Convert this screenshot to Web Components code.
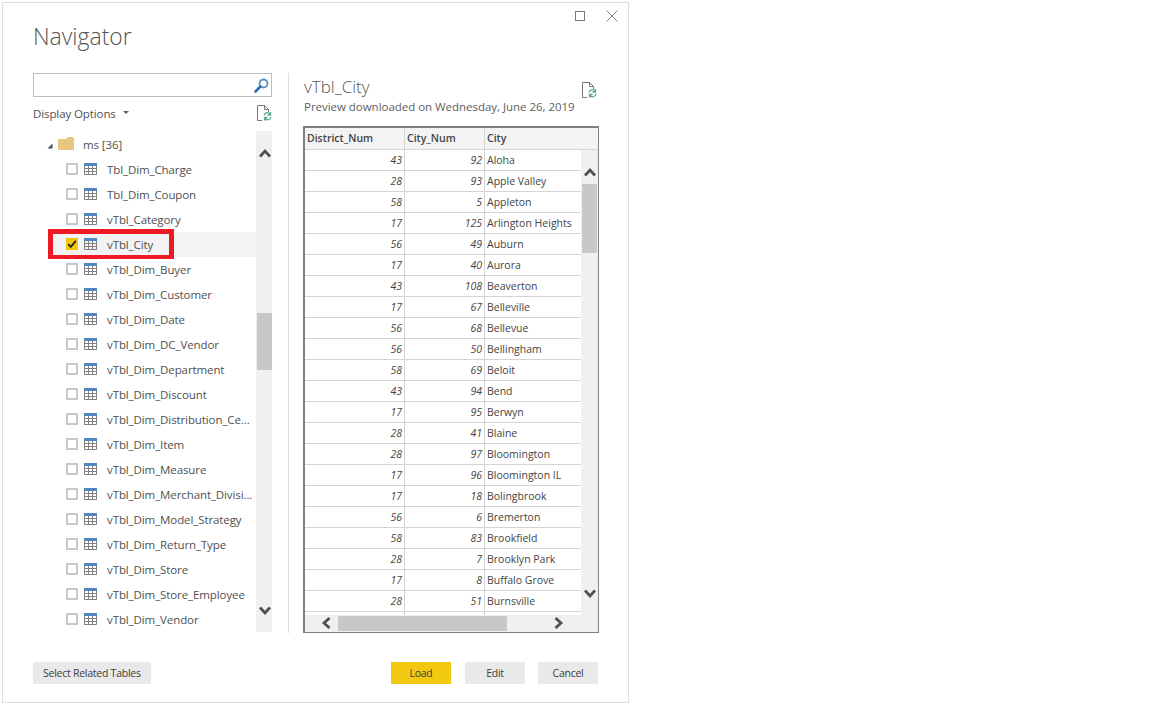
<!DOCTYPE html>
<html>
<head>
<meta charset="utf-8">
<title>Navigator</title>
<style>
	html, body { margin: 0; height: 100%; background: #fff; }
	body { font-family: "Open Sans", "Noto Sans", sans-serif; color: #444; overflow: hidden; }
	nav-button:last-child { margin-left: -1px; }
</style>
</head>
<body>
<nav-window>
	<nav-pane slot="left">
		<nav-search></nav-search>
		<nav-options></nav-options>
		<tree-list>
			<tree-row kind="folder" label="ms [36]"></tree-row>
			<tree-row label="Tbl_Dim_Charge"></tree-row>
			<tree-row label="Tbl_Dim_Coupon"></tree-row>
			<tree-row label="vTbl_Category"></tree-row>
			<tree-row label="vTbl_City" checked></tree-row>
			<tree-row label="vTbl_Dim_Buyer"></tree-row>
			<tree-row label="vTbl_Dim_Customer"></tree-row>
			<tree-row label="vTbl_Dim_Date"></tree-row>
			<tree-row label="vTbl_Dim_DC_Vendor"></tree-row>
			<tree-row label="vTbl_Dim_Department"></tree-row>
			<tree-row label="vTbl_Dim_Discount"></tree-row>
			<tree-row label="vTbl_Dim_Distribution_Ce..."></tree-row>
			<tree-row label="vTbl_Dim_Item"></tree-row>
			<tree-row label="vTbl_Dim_Measure"></tree-row>
			<tree-row label="vTbl_Dim_Merchant_Divisi..."></tree-row>
			<tree-row label="vTbl_Dim_Model_Strategy"></tree-row>
			<tree-row label="vTbl_Dim_Return_Type"></tree-row>
			<tree-row label="vTbl_Dim_Store"></tree-row>
			<tree-row label="vTbl_Dim_Store_Employee"></tree-row>
			<tree-row label="vTbl_Dim_Vendor"></tree-row>
		</tree-list>
	</nav-pane>
	<nav-preview slot="right" name="vTbl_City" note="Preview downloaded on Wednesday, June 26, 2019">
		<data-grid></data-grid>
	</nav-preview>
	<nav-button slot="footer-left">Select Related Tables</nav-button>
	<nav-button slot="footer-right" primary>Load</nav-button>
	<nav-button slot="footer-right">Edit</nav-button>
	<nav-button slot="footer-right">Cancel</nav-button>
</nav-window>

<script>
const chevrons = {
	up: 'M1 8.5 L6 3 L11 8.5',
	down: 'M1 1.5 L6 7 L11 1.5',
	left: 'M8.5 1 L3 6 L8.5 11',
	right: 'M1.5 1 L7 6 L1.5 11'
}

//component scroll-bar
window.customElements.define('scroll-bar',
	class extends HTMLElement {
		arrow(dir) {
			const box = dir == 'up' || dir == 'down' ? '0 0 12 10' : '0 0 10 12'
			const size = dir == 'up' || dir == 'down' ? 'width="12" height="10"' : 'width="10" height="12"'
			return `<svg ${size} viewBox="${box}"><path d="${chevrons[dir]}" fill="none" stroke="#505050" stroke-width="2.8"/></svg>`
		}

		connectedCallback() {
			const flat = this.getAttribute('dir') == 'h'
			const start = this.getAttribute('start') || 0
			const size = this.getAttribute('size') || 0
			const a = flat ? 'left' : 'up'
			const b = flat ? 'right' : 'down'
			this.shadowRoot.innerHTML = `
			<style>
				:host{
					display:flex;
					flex:none;
					background:#f0f0f0;
					position:relative;
					flex-direction:${flat ? 'row' : 'column'};
				}
				.thumb{
					background:#c8c8c8;
					flex:none;
					${flat ? `margin-left:${start}px;width:${size}px;height:15px;margin-top:1px;` : `margin-top:${start}px;height:${size}px;width:15px;margin-left:1px;`}
				}
				.arrow{
					position:absolute;
					display:flex;
				}
				.a{ ${flat ? 'left:16px;top:2px;' : 'left:3px;top:' + (this.getAttribute('top') || 16) + 'px;'} }
				.b{ ${flat ? 'right:17px;top:2px;' : 'left:3px;bottom:' + (this.getAttribute('bottom') || 16) + 'px;'} }
			</style>
			<div class="thumb"></div>
			<span class="arrow a">${this.arrow(a)}</span>
			<span class="arrow b">${this.arrow(b)}</span>
			`
		}

		constructor() {
			super()
			this.attachShadow({ mode: "open" })
		}
	}
)

//component refresh-icon
window.customElements.define('refresh-icon',
	class extends HTMLElement {
		template() {
			return `
			<style>
				:host{ display:inline-flex; flex:none; width:15px; height:16px; }
			</style>
			<svg width="15" height="16" viewBox="0 0 15 16">
				<path d="M.5 .5 H7.5 L11.5 4.5 V7 M7.5 .5 V4.5 H11.5 M.5 .5 V15.5 H5" fill="none" stroke="#777"/>
				<path d="M7 10.5 A3.4 3.4 0 0 1 13 9 M13.5 7 V10 H10.5" fill="none" stroke="#58a98c" stroke-width="1.3"/>
				<path d="M14 12 A3.4 3.4 0 0 1 8 13.5 M7.5 15.5 V12.5 H10.5" fill="none" stroke="#58a98c" stroke-width="1.3"/>
			</svg>
			`
		}

		constructor() {
			super()
			this.attachShadow({ mode: "open" })
			this.shadowRoot.innerHTML = this.template()
		}
	}
)

//component nav-search
window.customElements.define('nav-search',
	class extends HTMLElement {
		template() {
			return `
			<style>
				:host{
					display:flex;
					justify-content:flex-end;
					align-items:center;
					height:22px;
					border:1px solid #bdbdbd;
					padding-right:2px;
				}
			</style>
			<svg width="15" height="15" viewBox="0 0 15 15">
				<circle cx="9.5" cy="5.5" r="4" fill="none" stroke="#5b8fc4" stroke-width="1.8"/>
				<path d="M6.5 8.5 L1.5 13.5" stroke="#2f6eae" stroke-width="2.6" stroke-linecap="round"/>
			</svg>
			`
		}

		constructor() {
			super()
			this.attachShadow({ mode: "open" })
			this.shadowRoot.innerHTML = this.template()
		}
	}
)

//component nav-options
window.customElements.define('nav-options',
	class extends HTMLElement {
		template() {
			return `
			<style>
				:host{
					display:flex;
					align-items:center;
					height:18px;
					margin:7px 0 9px;
					font-size:11.5px;
					letter-spacing:-.1px;
					color:#505050;
				}
				.caret{
					width:0;
					height:0;
					margin:-2px 0 0 7px;
					border:3px solid transparent;
					border-top:3px solid #606060;
					border-bottom:0;
				}
				refresh-icon{ margin-left:auto; }
			</style>
			<span>Display Options</span>
			<span class="caret"></span>
			<refresh-icon></refresh-icon>
			`
		}

		constructor() {
			super()
			this.attachShadow({ mode: "open" })
			this.shadowRoot.innerHTML = this.template()
		}
	}
)

//component tree-row
window.customElements.define('tree-row',
	class extends HTMLElement {
		folder() {
			return `
			<svg class="twist" width="6" height="6" viewBox="0 0 6 6"><path d="M5.5 .5 V5.5 H.5 Z" fill="#505050"/></svg>
			<svg class="folder" width="16" height="14" viewBox="0 0 16 14">
				<path d="M0 2 H8 L10 0 H15 V1 H16 V13 H0 Z" fill="#e9c582"/>
			</svg>
			`
		}

		item() {
			return `
			<span class="check">${this.hasAttribute('checked') ? '<svg width="12" height="12" viewBox="0 0 12 12"><path d="M2.2 6.2 L4.8 8.8 L9.8 2.8" fill="none" stroke="#222" stroke-width="1.8"/></svg>' : ''}</span>
			<svg class="table" width="13" height="12" viewBox="0 0 13 12">
				<rect width="13" height="3" fill="#4f86bf"/>
				<path d="M.5 3 V11.5 H12.5 V3 M4.5 3 V11.5 M8.5 3 V11.5 M.5 5.5 H12.5 M.5 8.5 H12.5" fill="none" stroke="#808080"/>
			</svg>
			`
		}

		connectedCallback() {
			const isFolder = this.getAttribute('kind') == 'folder'
			this.shadowRoot.innerHTML = `
			<style>
				:host{
					display:flex;
					align-items:center;
					height:25px;
					position:relative;
					margin-left:${isFolder ? 14 : 19}px;
					font-size:11.5px;
					letter-spacing:-.1px;
					color:#505050;
					white-space:nowrap;
				}
				:host([checked]){ background:#f3f3f3; }
				:host([checked])::after{
					content:"";
					position:absolute;
					left:-4px;
					top:-3px;
					width:116px;
					height:21px;
					border:5px solid #ed1c24;
					border-bottom-width:4px;
				}
				svg{ flex:none; }
				.twist{ margin:2px 5px 0 0; }
				.folder{ margin-right:9px; margin-top:-1px; }
				.check{
					flex:none;
					width:8px;
					height:8px;
					border:2px solid #c8c8c8;
					margin:-2px 6px 0 14px;
					display:flex;
					align-items:center;
					justify-content:center;
				}
				:host([checked]) .check{ background:#f2c811; border-color:#f2c811; }
				.table{ margin:-2px 10px 0 0; }
			</style>
			${isFolder ? this.folder() : this.item()}
			<span>${this.getAttribute('label')}</span>
			`
		}

		constructor() {
			super()
			this.attachShadow({ mode: "open" })
		}
	}
)

//component tree-list
window.customElements.define('tree-list',
	class extends HTMLElement {
		template() {
			return `
			<style>
				:host{
					display:flex;
					height:501px;
				}
				.rows{ flex:1; min-width:0; padding-top:1px; }
				scroll-bar{ width:16px; }
			</style>
			<div class="rows"><slot></slot></div>
			<scroll-bar start="182" size="57" top="17" bottom="16"></scroll-bar>
			`
		}

		constructor() {
			super()
			this.attachShadow({ mode: "open" })
			this.shadowRoot.innerHTML = this.template()
		}
	}
)

//component nav-pane
window.customElements.define('nav-pane',
	class extends HTMLElement {
		template() {
			return `
			<style>
				:host{ display:block; width:239px; }
			</style>
			<slot></slot>
			`
		}

		constructor() {
			super()
			this.attachShadow({ mode: "open" })
			this.shadowRoot.innerHTML = this.template()
		}
	}
)

//component data-grid
window.customElements.define('data-grid',
	class extends HTMLElement {
		cell(text, cls) {
			return `<div class="cell ${cls}">${text}</div>`
		}

		template() {
			const rows = [
				[43, 92, 'Aloha'], [28, 93, 'Apple Valley'], [58, 5, 'Appleton'], [17, 125, 'Arlington Heights'],
				[56, 49, 'Auburn'], [17, 40, 'Aurora'], [43, 108, 'Beaverton'], [17, 67, 'Belleville'],
				[56, 68, 'Bellevue'], [56, 50, 'Bellingham'], [58, 69, 'Beloit'], [43, 94, 'Bend'],
				[17, 95, 'Berwyn'], [28, 41, 'Blaine'], [28, 97, 'Bloomington'], [17, 96, 'Bloomington IL'],
				[17, 18, 'Bolingbrook'], [56, 6, 'Bremerton'], [58, 83, 'Brookfield'], [28, 7, 'Brooklyn Park'],
				[17, 8, 'Buffalo Grove'], [28, 51, 'Burnsville'], ['', '', '']
			]
			return `
			<style>
				:host{
					display:grid;
					grid-template-columns:1fr 17px;
					grid-template-rows:22px 465px 17px;
					width:293px;
					height:504px;
					margin-left:-1px;
					border:2px solid #808080;
					border-width:2px 1px 1px 2px;
					font-size:10.5px;
					color:#444;
				}
				.head{
					grid-column:1 / 3;
					display:grid;
					grid-template-columns:100px 80px 1fr;
					background:#f3f3f3;
					border-bottom:1px solid #d4d4d4;
					box-sizing:border-box;
					font-weight:600;
				}
				.head .cell{ padding-bottom:2px; }
				.body{
					display:grid;
					grid-template-columns:100px 80px 1fr;
					grid-auto-rows:21px;
					overflow:hidden;
				}
				.cell{
					box-sizing:border-box;
					border-right:1px solid #d4d4d4;
					padding:0 2px;
					display:flex;
					align-items:center;
					white-space:nowrap;
					overflow:hidden;
				}
				.head .cell:last-child, .body .cell.txt{ border-right:0; }
				.body .cell{ border-bottom:1px solid #d4d4d4; }
				.num{ justify-content:flex-end; font-style:italic; }
				.corner{ background:#f0f0f0; }
				.hbar{ grid-column:1; }
			</style>
			<div class="head">
				${this.cell('District_Num', '')}${this.cell('City_Num', '')}${this.cell('City', '')}
			</div>
			<div class="body">
				${rows.map(r => this.cell(r[0], 'num') + this.cell(r[1], 'num') + this.cell(r[2], 'txt')).join('')}
			</div>
			<scroll-bar start="34" size="69" top="17" bottom="16"></scroll-bar>
			<scroll-bar class="hbar" dir="h" start="33" size="169"></scroll-bar>
			<div class="corner"></div>
			`
		}

		constructor() {
			super()
			this.attachShadow({ mode: "open" })
			this.shadowRoot.innerHTML = this.template()
		}
	}
)

//component nav-preview
window.customElements.define('nav-preview',
	class extends HTMLElement {
		connectedCallback() {
			this.shadowRoot.innerHTML = `
			<style>
				:host{ display:block; width:297px; }
				.top{ display:flex; height:53px; align-items:flex-start; }
				h2{
					margin:1px 0 0;
					font-size:17px;
					font-weight:300;
					line-height:25px;
					color:#555;
				}
				p{
					margin:0;
					font-size:11.5px;
					letter-spacing:-.03px;
					line-height:16px;
					color:#606060;
					white-space:nowrap;
				}
				refresh-icon{ margin:9px 4px 0 auto; }
			</style>
			<div class="top">
				<div>
					<h2>${this.getAttribute('name')}</h2>
					<p>${this.getAttribute('note')}</p>
				</div>
				<refresh-icon></refresh-icon>
			</div>
			<slot></slot>
			`
		}

		constructor() {
			super()
			this.attachShadow({ mode: "open" })
		}
	}
)

//component nav-button
window.customElements.define('nav-button',
	class extends HTMLElement {
		template() {
			return `
			<style>
				:host{
					display:flex;
					align-items:center;
					justify-content:center;
					height:22px;
					min-width:60px;
					padding:0 10px;
					box-sizing:border-box;
					background:#e9e9e9;
					font-size:10.5px;
					letter-spacing:-.25px;
					color:#404040;
					white-space:nowrap;
				}
				:host([primary]){ background:#f2c811; }
			</style>
			<slot></slot>
			`
		}

		constructor() {
			super()
			this.attachShadow({ mode: "open" })
			this.shadowRoot.innerHTML = this.template()
		}
	}
)

//component nav-window
window.customElements.define('nav-window',
	class extends HTMLElement {
		template() {
			return `
			<style>
				:host{
					display:flex;
					flex-direction:column;
					width:627px;
					height:701px;
					margin:2px 0 0 2px;
					box-sizing:border-box;
					border:1px solid #dedede;
				}
				.bar{
					display:flex;
					justify-content:flex-end;
					align-items:center;
					gap:21px;
					height:26px;
					padding-right:10px;
				}
				h1{
					margin:-6px 0 0;
					padding-left:30px;
					height:50px;
					font-size:23px;
					font-weight:300;
					line-height:26px;
					color:#555;
				}
				.main{
					display:flex;
					height:560px;
					padding-left:30px;
				}
				.rule{
					width:1px;
					background:#dcdcdc;
					margin:0 15px 0 16px;
				}
				.foot{
					display:flex;
					justify-content:space-between;
					margin-top:29px;
					padding:0 30px;
				}
				.actions{ display:flex; gap:14px; }
			</style>
			<div class="bar">
				<svg width="10" height="10" viewBox="0 0 10 10"><rect x=".5" y=".5" width="9" height="9" fill="none" stroke="#777"/></svg>
				<svg width="12" height="12" viewBox="0 0 12 12"><path d="M.5 .5 L11.5 11.5 M11.5 .5 L.5 11.5" stroke="#808080"/></svg>
			</div>
			<h1>Navigator</h1>
			<div class="main">
				<slot name="left"></slot>
				<div class="rule"></div>
				<slot name="right"></slot>
			</div>
			<div class="foot">
				<slot name="footer-left"></slot>
				<div class="actions"><slot name="footer-right"></slot></div>
			</div>
			`
		}

		constructor() {
			super()
			this.attachShadow({ mode: "open" })
			this.shadowRoot.innerHTML = this.template()
		}
	}
)
</script>
</body>
</html>
